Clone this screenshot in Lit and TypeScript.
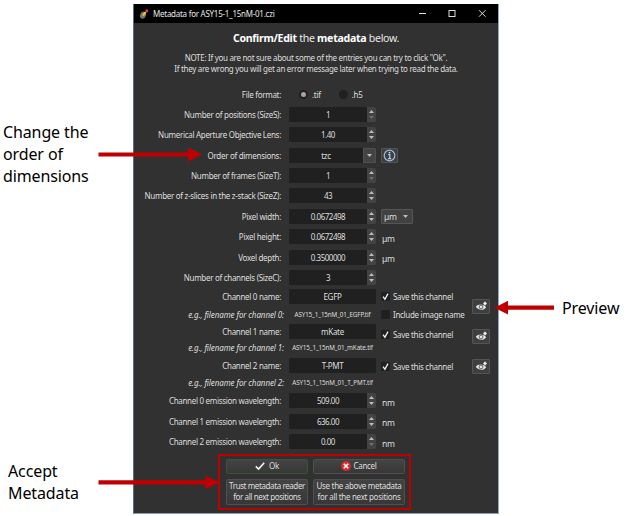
import { LitElement, html, css, svg, nothing } from "lit";
import { customElement, property } from "lit/decorators.js";

const arrowUp = svg`<path d="M0 3 2.5 0 5 3Z" fill="currentColor"/>`;

@customElement("num-field")
class NumField extends LitElement {
  @property() value = "";
  @property({ type: Boolean }) atMin = false;
  @property() kind = "spin";

  static styles = css`
    :host { display: flex; width: 87px; height: 15px; box-sizing: border-box; background: #202020;
      border-radius: 1.5px; overflow: hidden; color: #dedede; }
    .value { flex: 1; text-align: center; line-height: 15.5px; }
    .value.number { letter-spacing: -0.48px; }
    .spin { width: 9px; display: flex; flex-direction: column; align-items: center; justify-content: center;
      gap: 3px; background: #434343; color: #bcbcbc; }
    .drop { width: 13px; display: flex; align-items: center; justify-content: center; background: #434343;
      border: 1px solid #505050; box-sizing: border-box; color: #bcbcbc; }
    svg { display: block; width: 5px; height: 3px; }
    .flip { transform: rotate(180deg); }
    .dim { color: #707070; }
  `;

  render() {
    const up = html`<svg viewBox="0 0 5 3">${arrowUp}</svg>`;
    const down = html`<svg class="flip ${this.atMin ? "dim" : ""}" viewBox="0 0 5 3">${arrowUp}</svg>`;
    return html`<span class="value ${this.kind === "spin" ? "number" : ""}">${this.value}</span>
      ${this.kind === "spin" ? html`<span class="spin">${up}${down}</span>` : nothing}
      ${this.kind === "combo" ? html`<span class="drop">${down}</span>` : nothing}`;
  }
}

@customElement("check-item")
class CheckItem extends LitElement {
  @property({ type: Boolean }) checked = false;

  static styles = css`
    :host { display: flex; align-items: center; gap: 3px; white-space: nowrap; }
    .box { width: 9px; height: 9px; background: #202020; border-radius: 1px; display: flex; }
    svg { width: 9px; height: 9px; }
  `;

  render() {
    return html`<span class="box">${this.checked
      ? html`<svg viewBox="0 0 9 9"><path d="M2 4.6 3.9 7.2 7 1.6" fill="none" stroke="#f2f2f2" stroke-width="1.3"/></svg>`
      : nothing}</span><slot></slot>`;
  }
}

interface Row {
  label: string;
  value: string;
  size?: string;
  kind?: string;
  atMin?: boolean;
  extra?: unknown;
  example?: boolean;
}

const dropArrow = html`<svg class="tri" viewBox="0 0 5 3"><path d="M0 0H5L2.5 3Z" fill="#bcbcbc"/></svg>`;

const rows: Row[] = [
  { label: "Number of positions (SizeS):", value: "1", atMin: true },
  { label: "Numerical Aperture Objective Lens:", value: "1.40" },
  {
    label: "Order of dimensions:", value: "tzc", kind: "combo",
    extra: html`<span class="info"><svg viewBox="0 0 12 12"><circle cx="6" cy="6" r="4.9" fill="none" stroke="#9bb9e4" stroke-width="1.1"/><circle cx="6" cy="3.4" r=".85" fill="#b8cff0"/><path d="M4.8 5.2H6.3V8.6M4.7 8.8H7.5" fill="none" stroke="#b8cff0" stroke-width="1.1"/></svg></span>`,
  },
  { label: "Number of frames (SizeT):", value: "1", atMin: true },
  { label: "Number of z-slices in the z-stack (SizeZ):", value: "43" },
  { label: "Pixel width:", value: "0.0672498", extra: html`<span class="unit-combo"><span>µm</span>${dropArrow}</span>` },
  { label: "Pixel height:", value: "0.0672498", extra: html`<span class="unit">µm</span>` },
  { label: "Voxel depth:", value: "0.3500000", extra: html`<span class="unit">µm</span>` },
  { label: "Number of channels (SizeC):", value: "3" },
  { label: "Channel 0 name:", value: "EGFP", kind: "text", size: "name0", extra: html`<check-item checked>Save this channel</check-item>` },
  { label: "e.g., filename for channel 0:", value: "ASY15_1_15nM_01_EGFP.tif", size: "file0", example: true, extra: html`<check-item>Include image name</check-item>` },
  { label: "Channel 1 name:", value: "mKate", kind: "text", size: "name1", extra: html`<check-item class="low" checked>Save this channel</check-item>` },
  { label: "e.g., filename for channel 1:", value: "ASY15_1_15nM_01_mKate.tif", size: "file1", example: true },
  { label: "Channel 2 name:", value: "T-PMT", kind: "text", size: "name2", extra: html`<check-item class="lower" checked>Save this channel</check-item>` },
  { label: "e.g., filename for channel 2:", value: "ASY15_1_15nM_01_T_PMT.tif", size: "file2", example: true },
  { label: "Channel 0 emission wavelength:", value: "509.00", extra: html`<span class="unit">nm</span>` },
  { label: "Channel 1 emission wavelength:", value: "636.00", extra: html`<span class="unit">nm</span>` },
  { label: "Channel 2 emission wavelength:", value: "0.00", atMin: true, extra: html`<span class="unit">nm</span>` },
];

@customElement("app-root")
class AppRoot extends LitElement {
  static styles = css`
    :host { display: block; position: relative; width: 635px; height: 516px; overflow: hidden; background: #fff;
      font-family: "Noto Sans", "Open Sans", sans-serif; }
    .page { display: grid; grid-template-columns: 133px 366px 1fr; height: 516px; }
    .note { font-size: 16px; line-height: 22px; color: #000; letter-spacing: -0.12px; white-space: nowrap; }
    .left { display: flex; flex-direction: column; justify-content: space-between; padding: 121px 0 12px 3px; box-sizing: border-box; }
    .left .accept { padding-left: 5px; }
    .right { padding: 297px 0 0 63px; }
    .window { margin-top: 4px; height: 510px; box-sizing: border-box; background: #313131; color: #dedede;
      border: 1px solid #5c6f82; border-top: 0; border-right-color: #8fa6c8; border-bottom-color: #86a2b8;
      font-size: 8px; letter-spacing: -0.3px; display: flex; flex-direction: column; }
    .titlebar { height: 19px; background: #000; color: #e8e8e8; display: flex; align-items: center; padding: 0 11px 0 5px; letter-spacing: -0.26px; }
    .titlebar .name { margin-left: 4px; flex: 1; }
    .app-icon { width: 10px; height: 10px; }
    .controls { width: 69px; height: 9px; }
    .heading { height: 30px; line-height: 30px; text-align: center; font-size: 10.6px; color: #e8e8e8; }
    .heading b { color: #fff; }
    .hint { text-align: center; line-height: 10.6px; height: 31px; }
    .body { display: flex; }
    .form { width: 338px; }
    .row { display: grid; grid-template-columns: 147px 95px 1fr; align-items: center; height: 20.37px; white-space: nowrap; }
    .label { text-align: right; }
    .row num-field, .row .example { margin-left: 8px; }
    .extra { padding-left: 5px; display: flex; align-items: center; }
    .name0 { height: 18.6px; }
    .file0 { height: 16px; }
    .name1 { height: 17.8px; }
    .file1 { height: 16px; }
    .name2 { height: 18.4px; }
    .file2 { height: 16.3px; }
    .file0 .label, .file1 .label, .file2 .label { font-style: italic; width: 150px; letter-spacing: -0.1px; }
    .example { font-size: 6.3px; letter-spacing: -0.13px; text-align: center; }
    .low { margin-top: 6px; }
    .lower { margin-top: 3px; }
    .formats { margin-left: 18px; display: flex; align-items: center; gap: 4px; }
    .radio { width: 9px; height: 9px; border-radius: 50%; background: #202020; display: grid; place-items: center; }
    .radio.on::after { content: ""; width: 5px; height: 5px; border-radius: 50%; background: #a4a4a4; }
    .radio + span + .radio { margin-left: 14px; }
    .info, .eye { background: #3f3f3f; border: 1px solid #545454; border-radius: 1px; box-sizing: border-box; display: grid; place-items: center; }
    .info { width: 17px; height: 15px; }
    .info svg { width: 13px; height: 13px; }
    .unit { padding: 3px 0 0 1px; font-size: 8.5px; }
    .unit-combo { width: 32px; height: 15px; box-sizing: border-box; border: 1px solid #565656; background: #414141;
      border-radius: 1px; display: flex; align-items: center; justify-content: space-between; padding: 0 4px 0 2px; font-size: 8.5px; }
    .tri { width: 5px; height: 3px; }
    .previews { padding-top: 215px; display: flex; flex-direction: column; gap: 15px; }
    .eye { width: 18px; height: 15px; }
    .eye svg { width: 13px; height: 11px; }
    .actions { margin: 2px 0 0 84px; width: 193px; height: 56px; box-sizing: border-box; border: 2px solid #c00000;
      display: grid; grid-template-columns: 82px 92px; grid-template-rows: 15px 26px; column-gap: 5px; row-gap: 5px; padding: 3px 0 0 6px; }
    .button { border: 1px solid #505050; background: linear-gradient(#434343, #383838); border-radius: 1.5px;
      box-sizing: border-box; display: flex; align-items: center; justify-content: center; text-align: center;
      line-height: 10.5px; white-space: nowrap; gap: 4px; }
    .button.default { border-color: #3a5538; }
    .button.trust { letter-spacing: -0.4px; }
    .button svg { width: 10px; height: 10px; }
    .button.cancel { gap: 2px; }
    .arrows { position: absolute; left: 0; top: 0; width: 635px; height: 516px; }
  `;

  row(r: Row) {
    return html`<div class="row ${r.size ?? ""}">
      <span class="label">${r.label}</span>
      ${r.example
        ? html`<span class="example">${r.value}</span>`
        : html`<num-field .value=${r.value} .kind=${r.kind ?? "spin"} .atMin=${r.atMin ?? false}></num-field>`}
      <span class="extra">${r.extra ?? nothing}</span>
    </div>`;
  }

  eye() {
    return html`<span class="eye"><svg viewBox="0 0 13 11">
      <path d="M.8 5.7C3 2.7 8.5 2.6 11.2 6.2 8.7 9.8 3.4 9.5.8 5.7Z" fill="#e6e6e6"/>
      <circle cx="6" cy="6" r="1.9" fill="none" stroke="#3f3f3f" stroke-width=".8"/>
      <path d="M10 0.8V4.2M8.3 2.5H11.7" stroke="#f0f0f0" stroke-width="1.6"/></svg></span>`;
  }

  render() {
    return html`
      <div class="page">
        <div class="left">
          <div class="note">Change the<br />order of<br />dimensions</div>
          <div class="note accept">Accept<br />Metadata</div>
        </div>
        <div class="window">
          <div class="titlebar">
            <svg class="app-icon" viewBox="0 0 10 10"><ellipse cx="4" cy="6.2" rx="2.8" ry="3.6" transform="rotate(25 4 6.2)" fill="#77776a"/><path d="M4 6.5 6.7 3" stroke="#f1cf27" stroke-width="2"/><circle cx="7.8" cy="1.8" r="1.5" fill="#ef3b35"/></svg>
            <span class="name">Metadata for ASY15-1_15nM-01.czi</span>
            <svg class="controls" viewBox="0 0 69 9" fill="none" stroke="#dcdcdc"><path d="M1 4.5H8"/><rect x="31" y="1.5" width="6" height="6"/><path d="M61 1.2 67.5 7.7M67.5 1.2 61 7.7"/></svg>
          </div>
          <div class="heading"><b>Confirm/Edit</b> the <b>metadata</b> below.</div>
          <div class="hint">NOTE: If you are not sure about some of the entries you can try to click "Ok".<br />If they are wrong you will get an error message later when trying to read the data.</div>
          <div class="body">
            <div class="form">
              <div class="row"><span class="label">File format:</span>
                <span class="formats"><i class="radio on"></i><span>.tif</span><i class="radio"></i><span>.h5</span></span></div>
              ${rows.map((r) => this.row(r))}
            </div>
            <div class="previews">${this.eye()}${this.eye()}${this.eye()}</div>
          </div>
          <div class="actions">
            <span class="button default"><svg viewBox="0 0 10 10"><path d="M.8 5.3 3.6 8 9.2 1.8" fill="none" stroke="#f4f4f4" stroke-width="1.6"/></svg>Ok</span>
            <span class="button cancel"><svg viewBox="0 0 10 10"><circle cx="5" cy="5" r="4.9" fill="#dc2b2b"/><path d="M2.8 2.8 7.2 7.2M7.2 2.8 2.8 7.2" stroke="#fff" stroke-width="1.6"/></svg>Cancel</span>
            <span class="button trust">Trust metadata reader<br />for all next positions</span>
            <span class="button">Use the above metadata<br />for all the next positions</span>
          </div>
        </div>
        <div class="right note">Preview</div>
      </div>
      <svg class="arrows" viewBox="0 0 635 516" fill="#c00000">
        <path d="M98.5 152.4H188V147.5L202 154.5 188 161.5V156.6H98.5Z"/>
        <path d="M98.5 480.2H205.5V475.5L219.5 482.4 205.5 489.3V484.4H98.5Z"/>
        <path d="M554 305.5H508V300.8L494.5 307.7 508 314.6V309.8H554Z"/>
      </svg>`;
  }
}
